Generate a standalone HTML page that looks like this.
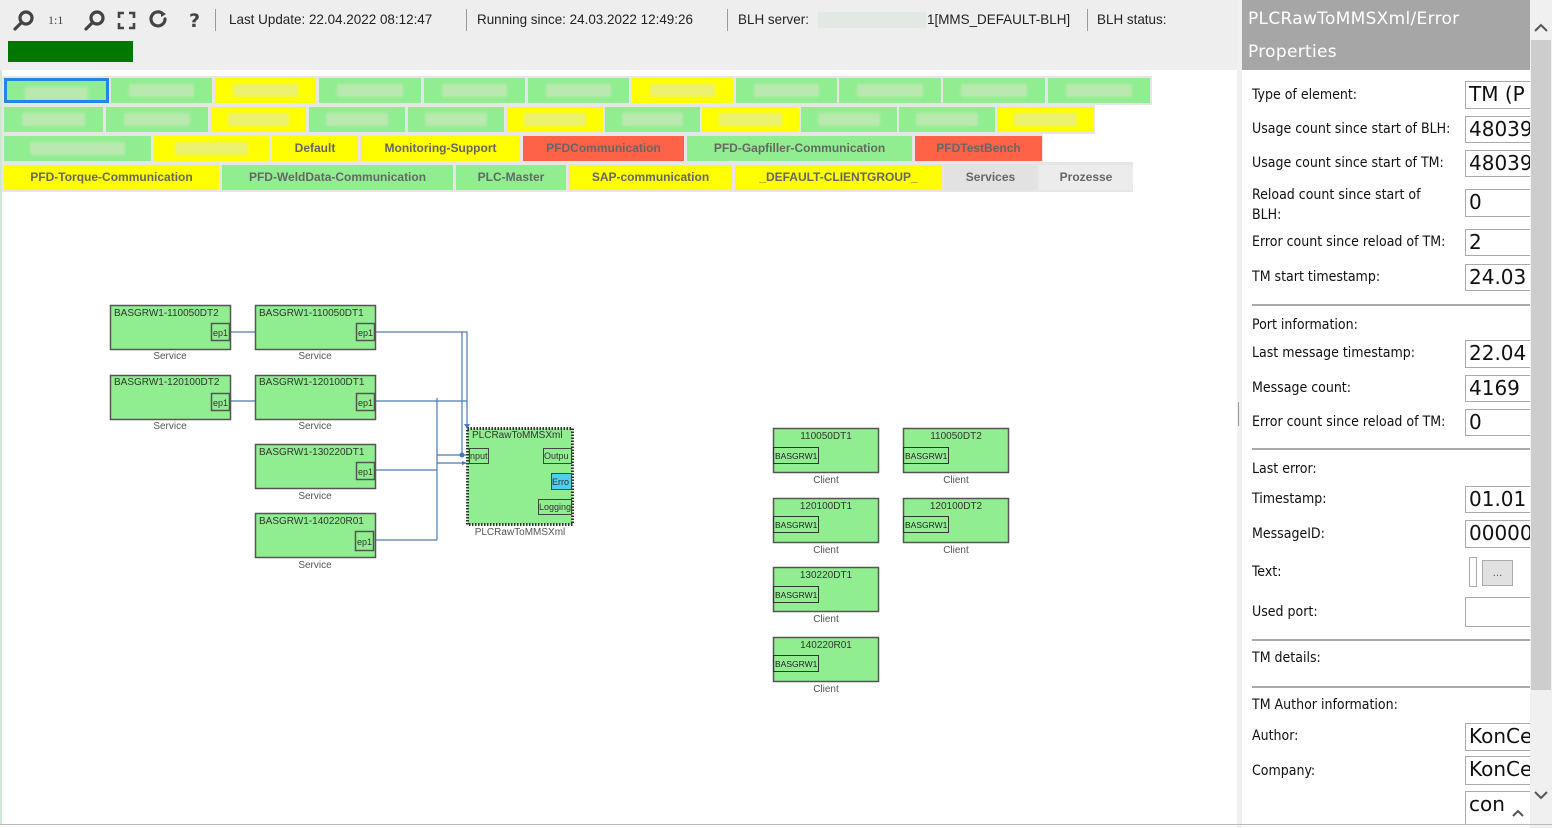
<!DOCTYPE html>
<html><head><meta charset="utf-8"><style>
*{margin:0;padding:0;box-sizing:border-box}
body{width:1552px;height:828px;overflow:hidden;background:#fff;font-family:"DejaVu Sans","Liberation Sans",sans-serif;position:relative}
.a{position:absolute}
#tb{left:0;top:0;width:1240px;height:70px;background:#eeeeee}
.tt{font-size:14px;color:#222;top:11px;font-family:"Liberation Sans",sans-serif;transform:scaleX(0.96);transform-origin:left}
.sep{width:1px;height:22px;background:#999;top:9px}
.tab{position:absolute;height:25px;font:bold 12px "Liberation Sans",sans-serif;color:#666;text-align:center;line-height:25px;white-space:nowrap;overflow:hidden}
.g{background:#90ee90}.y{background:#ffff00}.r{background:#ff6347}
.bl{position:absolute;height:13px;top:6px;left:18%;right:18%;background:rgba(220,230,200,0.55);filter:blur(1px)}
.lab{position:absolute;left:1252px;font-size:14px;color:#111;font-family:"DejaVu Sans Condensed","Liberation Sans",sans-serif}
.in{position:absolute;left:1465px;width:66px;border:1px solid #aaa;border-right:none;background:#fff;font-size:20px;color:#111;padding-left:3px;overflow:hidden;white-space:nowrap}
.hr{position:absolute;left:1252px;width:278px;height:2px;background:#aaa}
</style></head><body>
<div id="tb" class="a"></div>
<svg class="a" style="left:10px;top:8px" width="200" height="24" viewBox="0 0 200 24">
<g fill="none" stroke="#444" stroke-width="3.2" stroke-linecap="round">
<circle cx="16" cy="10" r="6"/><line x1="11" y1="15" x2="5" y2="21"/>
<circle cx="87" cy="10" r="6"/><line x1="82" y1="15" x2="76" y2="21"/>
<path d="M153 6a7 7 0 1 0 2 5" /></g>
<path d="M16 7v6M13 10h6" stroke="#eee" stroke-width="2"/>
<path d="M84 10h6" stroke="#eee" stroke-width="2"/>
<path d="M151 3l5 3-5 3z" fill="#444"/>
<text x="38" y="16" font-family="Liberation Serif" font-size="12" fill="#444">1:1</text>
<g fill="none" stroke="#444" stroke-width="2.6"><path d="M109 10V5h5M119 5h5v5M124 15v5h-5M114 20h-5v-5"/></g>
<text x="179" y="19" font-family="DejaVu Sans" font-weight="bold" font-size="19" fill="#444">?</text>
</svg>
<div class="a sep" style="left:215px"></div>
<div class="a tt" style="left:229px">Last Update: 22.04.2022 08:12:47</div>
<div class="a sep" style="left:466px"></div>
<div class="a tt" style="left:477px">Running since: 24.03.2022 12:49:26</div>
<div class="a sep" style="left:727px"></div>
<div class="a tt" style="left:738px">BLH server:</div>
<div class="a" style="left:818px;top:12px;width:108px;height:16px;background:#e2e8e2"></div>
<div class="a tt" style="left:927px">1[MMS_DEFAULT-BLH]</div>
<div class="a sep" style="left:1087px"></div>
<div class="a tt" style="left:1097px">BLH status:</div>
<div class="a" style="left:8px;top:41px;width:125px;height:21px;background:#007800"></div>
<div class="a" style="left:0;top:70px;width:2px;height:755px;background:#cfe8cf"></div>
<div class="a" style="left:2px;top:76px;width:1150px;height:116px;background:#e6e6e6"></div>
<div class="a" style="left:1133px;top:162px;width:20px;height:30px;background:#fff"></div>
<div class="a" style="left:1043px;top:134px;width:110px;height:28px;background:#fff"></div>
<div class="a" style="left:1095px;top:105px;width:58px;height:29px;background:#fff"></div>
<!-- row1 -->
<div class="tab g" style="left:4px;top:78px;width:105px;border:3px solid #1e88e5"><div class="bl"></div></div>
<div class="tab g" style="left:111px;top:78px;width:101px"><div class="bl"></div></div>
<div class="tab y" style="left:215px;top:78px;width:101px"><div class="bl"></div></div>
<div class="tab g" style="left:319px;top:78px;width:102px"><div class="bl"></div></div>
<div class="tab g" style="left:424px;top:78px;width:101px"><div class="bl"></div></div>
<div class="tab g" style="left:528px;top:78px;width:101px"><div class="bl"></div></div>
<div class="tab y" style="left:632px;top:78px;width:101px"><div class="bl"></div></div>
<div class="tab g" style="left:736px;top:78px;width:101px"><div class="bl"></div></div>
<div class="tab g" style="left:839px;top:78px;width:102px"><div class="bl"></div></div>
<div class="tab g" style="left:943px;top:78px;width:102px"><div class="bl"></div></div>
<div class="tab g" style="left:1048px;top:78px;width:102px"><div class="bl"></div></div>
<!-- row2 -->
<div class="tab g" style="left:4px;top:107px;width:99px"><div class="bl"></div></div>
<div class="tab g" style="left:106px;top:107px;width:102px"><div class="bl"></div></div>
<div class="tab y" style="left:211px;top:107px;width:95px"><div class="bl"></div></div>
<div class="tab g" style="left:309px;top:107px;width:96px"><div class="bl"></div></div>
<div class="tab g" style="left:408px;top:107px;width:96px"><div class="bl"></div></div>
<div class="tab y" style="left:507px;top:107px;width:96px"><div class="bl"></div></div>
<div class="tab g" style="left:605px;top:107px;width:95px"><div class="bl"></div></div>
<div class="tab y" style="left:702px;top:107px;width:97px"><div class="bl"></div></div>
<div class="tab g" style="left:801px;top:107px;width:96px"><div class="bl"></div></div>
<div class="tab g" style="left:899px;top:107px;width:96px"><div class="bl"></div></div>
<div class="tab y" style="left:997px;top:107px;width:97px"><div class="bl"></div></div>
<!-- row3 -->
<div class="tab g" style="left:4px;top:136px;width:147px"><div class="bl"></div></div>
<div class="tab y" style="left:154px;top:136px;width:115px"><div class="bl"></div></div>
<div class="tab y" style="left:272px;top:136px;width:86px">Default</div>
<div class="tab y" style="left:361px;top:136px;width:159px">Monitoring-Support</div>
<div class="tab r" style="left:523px;top:136px;width:161px">PFDCommunication</div>
<div class="tab g" style="left:687px;top:136px;width:225px">PFD-Gapfiller-Communication</div>
<div class="tab r" style="left:915px;top:136px;width:127px">PFDTestBench</div>
<!-- row4 -->
<div class="tab y" style="left:4px;top:165px;width:215px">PFD-Torque-Communication</div>
<div class="tab g" style="left:222px;top:165px;width:231px">PFD-WeldData-Communication</div>
<div class="tab g" style="left:456px;top:165px;width:110px">PLC-Master</div>
<div class="tab y" style="left:569px;top:165px;width:163px">SAP-communication</div>
<div class="tab y" style="left:735px;top:165px;width:207px">_DEFAULT-CLIENTGROUP_</div>
<div class="tab" style="left:944px;top:165px;width:93px;background:#e2e2e2">Services</div>
<div class="tab" style="left:1039px;top:165px;width:94px;background:#ececec">Prozesse</div>

<svg class="a" style="left:0;top:0" width="1240" height="828" font-family="Liberation Sans,sans-serif">
<g fill="none" stroke="#4a79b5" stroke-width="1.2">
<path d="M230 332H255M230 401H255"/>
<path d="M375 332H462V455M375 332H467V427M375 401H467M437 398V540M375 470H437M375 540H437M437 455H466M437 463H466"/>
</g>
<circle cx="462" cy="455" r="2.5" fill="#4a79b5"/>
<path d="M464 424l3 5 3-5z" fill="#4a79b5"/>
<path d="M462 461l5 2-5 2z" fill="#4a79b5"/>
<g stroke="#555" stroke-width="1.5" fill="#90ee90">
<rect x="110.5" y="305.5" width="120" height="44"/><rect x="110.5" y="375.5" width="120" height="44"/>
<rect x="255.5" y="305.5" width="120" height="44"/><rect x="255.5" y="375.5" width="120" height="44"/>
<rect x="255.5" y="444.5" width="120" height="44"/><rect x="255.5" y="513.5" width="120" height="44"/>
<rect x="211.5" y="323.5" width="18" height="17"/><rect x="211.5" y="393.5" width="18" height="17"/>
<rect x="356.5" y="323.5" width="18" height="17"/><rect x="356.5" y="393.5" width="18" height="17"/>
<rect x="356.5" y="462.5" width="18" height="17"/><rect x="355.5" y="531.5" width="18" height="19"/>
</g>
<g font-size="10" fill="#333">
<text x="114" y="316">BASGRW1-110050DT2</text><text x="114" y="385">BASGRW1-120100DT2</text>
<text x="259" y="316">BASGRW1-110050DT1</text><text x="259" y="385">BASGRW1-120100DT1</text>
<text x="259" y="455">BASGRW1-130220DT1</text><text x="259" y="524">BASGRW1-140220R01</text>
<text x="213" y="336" font-size="9">ep1</text><text x="213" y="406" font-size="9">ep1</text>
<text x="358" y="336" font-size="9">ep1</text><text x="358" y="406" font-size="9">ep1</text>
<text x="358" y="475" font-size="9">ep1</text><text x="357" y="545" font-size="9">ep1</text>
</g>
<g font-size="10" fill="#555" text-anchor="middle">
<text x="170" y="359">Service</text><text x="170" y="429">Service</text>
<text x="315" y="359">Service</text><text x="315" y="429">Service</text>
<text x="315" y="499">Service</text><text x="315" y="568">Service</text>
<text x="520" y="535">PLCRawToMMSXml</text>
</g>
<rect x="467.5" y="428.5" width="105" height="96" fill="#90ee90" stroke="#333" stroke-width="3" stroke-dasharray="1.5 1.5"/>
<g stroke="#444" fill="#90ee90" stroke-width="1">
<rect x="469.5" y="448.5" width="19" height="15"/><rect x="543.5" y="448.5" width="28" height="15"/>
<rect x="551.5" y="473.5" width="20" height="16" fill="#4dd0f0"/><rect x="538.5" y="499.5" width="33" height="15"/>
</g>
<g font-size="9" fill="#333"><text x="472" y="438" font-size="10">PLCRawToMMSXml</text>
<text x="470" y="459">nput</text><text x="544" y="459">Outpu</text><text x="552" y="485">Erro</text><text x="539" y="510">Logging</text></g>
<g stroke="#555" stroke-width="1.5" fill="#90ee90">
<rect x="773.5" y="428.5" width="105" height="44"/><rect x="903.5" y="428.5" width="105" height="44"/>
<rect x="773.5" y="498.5" width="105" height="44"/><rect x="903.5" y="498.5" width="105" height="44"/>
<rect x="773.5" y="567.5" width="105" height="44"/><rect x="773.5" y="637.5" width="105" height="44"/>
</g>
<g stroke="#333" stroke-width="1" fill="none">
<rect x="773.5" y="447.5" width="45" height="16"/><rect x="903.5" y="447.5" width="45" height="16"/>
<rect x="773.5" y="516.5" width="45" height="16"/><rect x="903.5" y="516.5" width="45" height="16"/>
<rect x="773.5" y="586.5" width="45" height="16"/><rect x="773.5" y="655.5" width="45" height="16"/>
</g>
<g font-size="8.5" fill="#222"><text x="775" y="459">BASGRW1</text><text x="905" y="459">BASGRW1</text>
<text x="775" y="528">BASGRW1</text><text x="905" y="528">BASGRW1</text><text x="775" y="598">BASGRW1</text><text x="775" y="667">BASGRW1</text></g>
<g font-size="10" text-anchor="middle" fill="#333">
<text x="826" y="439">110050DT1</text><text x="956" y="439">110050DT2</text>
<text x="826" y="509">120100DT1</text><text x="956" y="509">120100DT2</text>
<text x="826" y="578">130220DT1</text><text x="826" y="648">140220R01</text>
</g>
<g font-size="10" text-anchor="middle" fill="#555">
<text x="826" y="483">Client</text><text x="956" y="483">Client</text>
<text x="826" y="553">Client</text><text x="956" y="553">Client</text>
<text x="826" y="622">Client</text><text x="826" y="692">Client</text>
</g>
</svg>
<div class="a" style="left:1237px;top:0;width:5px;height:828px;background:#f0f0f0"></div>
<div class="a" style="left:1238px;top:402px;width:1px;height:24px;background:#999"></div>
<!-- right panel -->
<div class="a" style="left:1242px;top:0;width:288px;height:70px;background:#a6a6a6;color:#fff;font-size:17px;line-height:33px;padding:3px 0 0 6px;letter-spacing:0.3px">PLCRawToMMSXml/Error<br>Properties</div>
<div class="lab" style="top:87px">Type of element:</div><div class="in" style="top:81px;height:28px">TM (P</div>
<div class="lab" style="top:121px">Usage count since start of BLH:</div><div class="in" style="top:116px;height:27px">48039</div>
<div class="lab" style="top:155px">Usage count since start of TM:</div><div class="in" style="top:150px;height:27px">48039</div>
<div class="lab" style="top:185px;line-height:20px">Reload count since start of<br>BLH:</div><div class="in" style="top:189px;height:28px">0</div>
<div class="lab" style="top:234px">Error count since reload of TM:</div><div class="in" style="top:229px;height:27px">2</div>
<div class="lab" style="top:269px">TM start timestamp:</div><div class="in" style="top:264px;height:27px">24.03</div>
<div class="hr" style="top:304px"></div>
<div class="lab" style="top:317px">Port information:</div>
<div class="lab" style="top:345px">Last message timestamp:</div><div class="in" style="top:340px;height:28px">22.04</div>
<div class="lab" style="top:380px">Message count:</div><div class="in" style="top:375px;height:27px">4169</div>
<div class="lab" style="top:414px">Error count since reload of TM:</div><div class="in" style="top:409px;height:27px">0</div>
<div class="hr" style="top:448px"></div>
<div class="lab" style="top:461px">Last error:</div>
<div class="lab" style="top:491px">Timestamp:</div><div class="in" style="top:486px;height:27px">01.01</div>
<div class="lab" style="top:526px">MessageID:</div><div class="in" style="top:520px;height:28px">00000</div>
<div class="lab" style="top:564px">Text:</div>
<div class="a" style="left:1469px;top:557px;width:8px;height:30px;border:1px solid #aaa"></div>
<div class="a" style="left:1482px;top:560px;width:31px;height:26px;border:1px solid #aaa;background:#e1e1e1;font-size:10px;text-align:center;line-height:26px;color:#555">...</div>
<div class="lab" style="top:604px">Used port:</div><div class="in" style="top:597px;height:30px"></div>
<div class="hr" style="top:639px"></div>
<div class="lab" style="top:650px">TM details:</div>
<div class="hr" style="top:686px"></div>
<div class="lab" style="top:697px">TM Author information:</div>
<div class="lab" style="top:728px">Author:</div><div class="in" style="top:723px;height:28px">KonCe</div>
<div class="lab" style="top:763px">Company:</div><div class="in" style="top:756px;height:29px">KonCe</div>
<div class="in" style="top:791px;height:34px;padding-top:0">con</div>
<div class="a" style="left:1507px;top:796px;width:23px;height:28px;background:#fff"></div>
<svg class="a" style="left:1507px;top:796px" width="23" height="28"><path d="M6 20l5-5 5 5" fill="none" stroke="#555" stroke-width="2"/></svg>
<!-- scrollbar -->
<div class="a" style="left:1530px;top:0;width:22px;height:828px;background:#f0f0f0"></div>
<div class="a" style="left:1531px;top:40px;width:20px;height:650px;background:#cdcdcd"></div>
<svg class="a" style="left:1530px;top:0" width="22" height="828"><path d="M5 31l6-6 6 6M5 792l6 6 6-6" fill="none" stroke="#555" stroke-width="2"/></svg>
<div class="a" style="left:0;top:824px;width:1552px;height:1px;background:#bbb"></div>
</body></html>
